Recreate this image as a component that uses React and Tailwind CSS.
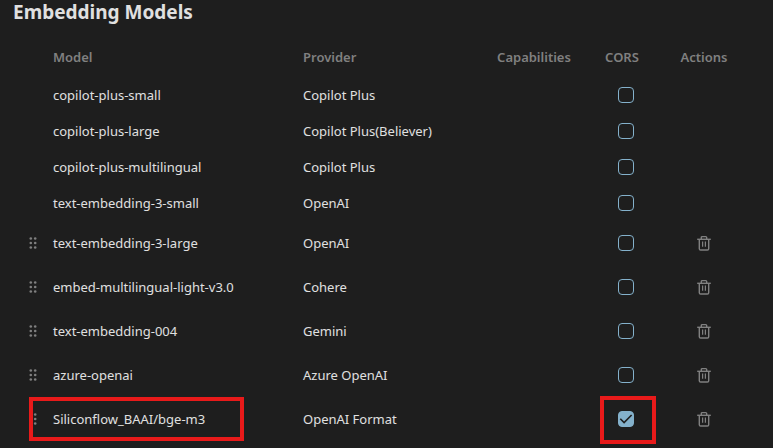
import React from "react";

const models = [
  { name: "copilot-plus-small", provider: "Copilot Plus", core: true },
  { name: "copilot-plus-large", provider: "Copilot Plus(Believer)", core: true },
  { name: "copilot-plus-multilingual", provider: "Copilot Plus", core: true },
  { name: "text-embedding-3-small", provider: "OpenAI", core: true },
  { name: "text-embedding-3-large", provider: "OpenAI" },
  { name: "embed-multilingual-light-v3.0", provider: "Cohere" },
  { name: "text-embedding-004", provider: "Gemini" },
  { name: "azure-openai", provider: "Azure OpenAI" },
  { name: "Siliconflow_BAAI/bge-m3", provider: "OpenAI Format", cors: true, marked: true },
];

function GripIcon() {
  return (
    <svg viewBox="0 0 8 14" className="h-3.5 w-2" fill="#808080" aria-hidden="true">
      {[2.5, 7, 11.5].map((y) => (
        <g key={y}>
          <circle cx="1.8" cy={y} r="1.3" />
          <circle cx="6.2" cy={y} r="1.3" />
        </g>
      ))}
    </svg>
  );
}

function TrashIcon() {
  return (
    <svg viewBox="0 0 16 16" className="size-4" fill="none" stroke="#808080" strokeWidth="1.4" aria-hidden="true">
      <path d="M1.2 4.3h13.6" />
      <path d="M5.3 4.3V2.6q0-1 1-1h3.4q1 0 1 1v1.7" />
      <path d="M3.3 4.3v9.4q0 1.3 1.3 1.3h6.8q1.3 0 1.3-1.3V4.3" />
      <path d="M6.6 6.6v5.2M9.4 6.6v5.2" strokeWidth="1.2" />
    </svg>
  );
}

function CorsCheckbox({ name, checked }) {
  return (
    <span className="relative flex size-4">
      <input
        type="checkbox"
        defaultChecked={checked}
        aria-label={`Enable CORS for ${name}`}
        className="peer size-4 appearance-none rounded border border-[#84b1cb] checked:bg-[#84b1cb]"
      />
      <svg
        viewBox="0 0 16 16"
        className="pointer-events-none absolute inset-0 hidden size-4 peer-checked:block"
        fill="none"
        stroke="#1e1e1e"
        strokeWidth="1.6"
        aria-hidden="true"
      >
        <path d="M2.3 7.8l3.8 3.8L13.6 4" />
      </svg>
    </span>
  );
}

function ModelRow({ model }) {
  return (
    <tr className={model.core ? "h-9" : "h-11"}>
      <td className="pl-4">
        {!model.core && (
          <button type="button" aria-label={`Reorder ${model.name}`} className="flex cursor-grab">
            <GripIcon />
          </button>
        )}
      </td>
      <td className="relative px-2">
        {model.name}
        {model.marked && (
          <span className="pointer-events-none absolute inset-y-0 -left-4 w-[215px] border-4 border-[#e81a1a]" />
        )}
      </td>
      <td className="px-2">{model.provider}</td>
      <td className="px-2" />
      <td className="relative pl-4 pr-2">
        <div className="flex justify-center">
          <CorsCheckbox name={model.name} checked={model.cors} />
        </div>
        {model.marked && (
          <span className="pointer-events-none absolute -top-px left-[19px] h-12 w-14 border-4 border-[#e81a1a]" />
        )}
      </td>
      <td className="px-2">
        {!model.core && (
          <button type="button" aria-label={`Delete ${model.name}`} className="mx-auto flex">
            <TrashIcon />
          </button>
        )}
      </td>
    </tr>
  );
}

export default function App() {
  return (
    <main className="min-h-screen bg-[#1e1e1e] pl-[13px] pr-7 font-['Noto_Sans','Open_Sans',sans-serif] text-[13px] leading-5 text-[#e0e0e0]">
      <h2 className="pb-3 text-[19px] font-bold leading-[25px]">Embedding Models</h2>
      <table className="w-full table-fixed border-collapse text-left">
        <colgroup>
          <col className="w-8" />
          <col />
          <col className="w-48" />
          <col className="w-[94px]" />
          <col className="w-[82px]" />
          <col className="w-[82px]" />
        </colgroup>
        <thead>
          <tr className="h-10 text-[#808080]">
            <td />
            <th scope="col" className="px-2 font-semibold">Model</th>
            <th scope="col" className="px-2 font-semibold">Provider</th>
            <th scope="col" className="text-center font-semibold">Capabilities</th>
            <th scope="col" className="text-center font-semibold">CORS</th>
            <th scope="col" className="text-center font-semibold">Actions</th>
          </tr>
        </thead>
        <tbody>
          {models.map((model) => (
            <ModelRow key={model.name} model={model} />
          ))}
        </tbody>
      </table>
    </main>
  );
}
